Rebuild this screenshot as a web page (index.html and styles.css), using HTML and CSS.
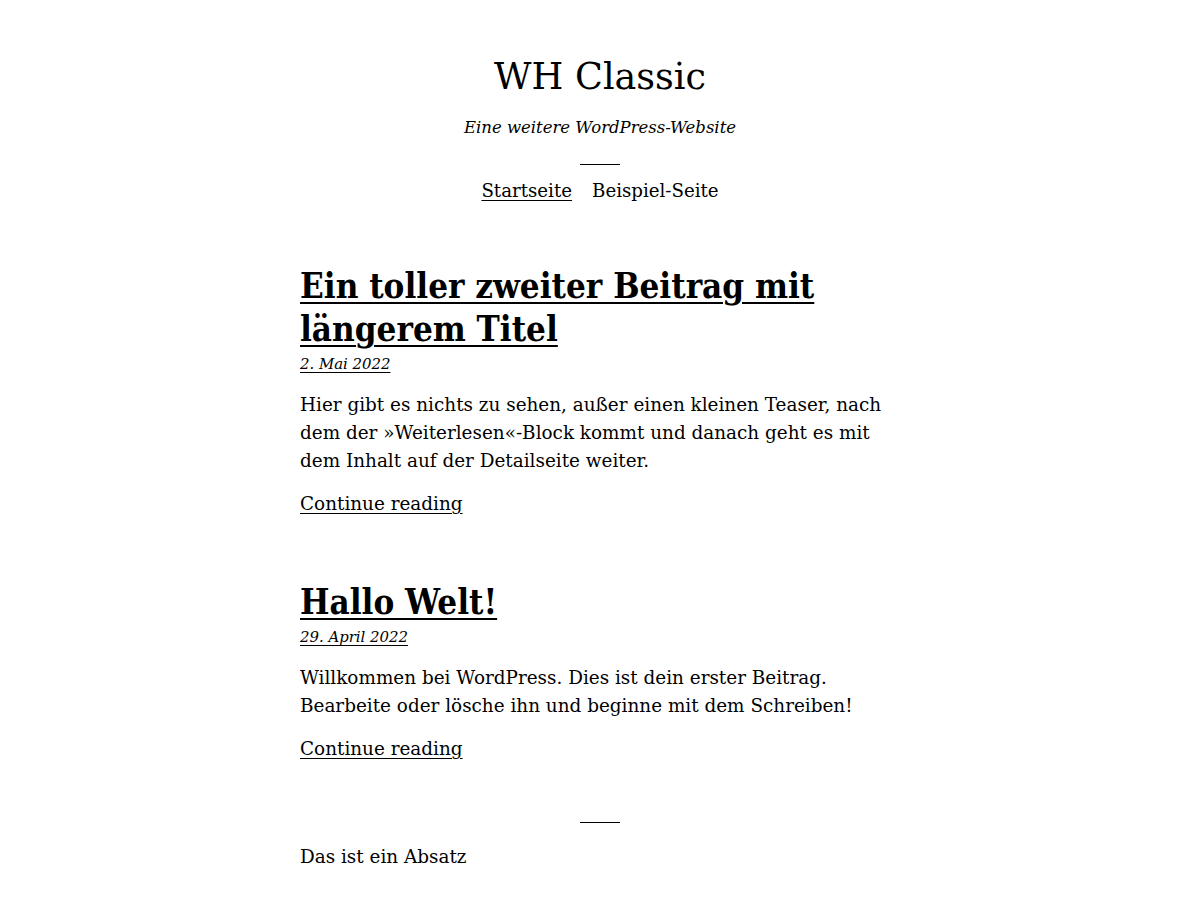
FILE: index.html
```html
<!DOCTYPE html>
<html lang="de">
<head>
<meta charset="utf-8">
<title>WH Classic</title>
<link rel="stylesheet" href="styles.css">
</head>
<body>
<header class="site-header">
  <p class="site-title">WH Classic</p>
  <p class="site-tagline">Eine weitere WordPress-Website</p>
  <hr class="sep">
  <nav class="nav">
    <a class="nav-link current" href="#">Startseite</a>
    <a class="nav-link" href="#">Beispiel-Seite</a>
  </nav>
</header>
<main class="content">
  <article class="post">
    <h2 class="post-title"><a href="#">Ein toller zweiter Beitrag mit längerem Titel</a></h2>
    <p class="post-date"><a href="#">2. Mai 2022</a></p>
    <p class="post-text">Hier gibt es nichts zu sehen, außer einen kleinen Teaser, nach dem der »Weiterlesen«-Block kommt und danach geht es mit dem Inhalt auf der Detailseite weiter.</p>
    <p class="post-more"><a href="#">Continue reading</a></p>
  </article>
  <article class="post">
    <h2 class="post-title"><a href="#">Hallo Welt!</a></h2>
    <p class="post-date"><a href="#">29. April 2022</a></p>
    <p class="post-text">Willkommen bei WordPress. Dies ist dein erster Beitrag. Bearbeite oder lösche ihn und beginne mit dem Schreiben!</p>
    <p class="post-more"><a href="#">Continue reading</a></p>
  </article>
</main>
<footer class="site-footer">
  <hr class="sep">
  <p class="footer-text">Das ist ein Absatz</p>
</footer>
</body>
</html>
```

FILE: styles.css
```css
html, body {
  margin: 0;
  padding: 0;
  background: #fff;
  color: #000;
}
body {
  font-family: "DejaVu Serif", "Liberation Serif", serif;
  font-size: 18.4px;
  line-height: 28px;
}
a {
  color: #000;
  text-decoration: underline;
  text-decoration-thickness: 1px;
  text-underline-offset: 3px;
}
p { margin: 0; }

.site-header {
  display: flex;
  flex-direction: column;
  align-items: center;
  padding-top: 53px;
}
.site-title {
  font-size: 36.5px;
  line-height: 48px;
}
.site-tagline {
  font-style: italic;
  font-size: 16.5px;
  line-height: 28px;
  margin-top: 13px;
}
.sep {
  width: 40px;
  height: 0;
  border: 0;
  border-top: 1px solid #000;
  margin: 22px auto 12px;
}
.nav {
  display: flex;
  gap: 20px;
  font-size: 18.2px;
}
.nav-link { text-decoration: none; }
.nav-link.current { text-decoration: underline; }

.content {
  width: 600px;
  margin: 59px auto 0;
}
.post { margin-bottom: 62px; }
.post:last-child { margin-bottom: 59px; }
.post-title {
  margin: 0;
  font-size: 34.7px;
  line-height: 43px;
  font-weight: 700;
  font-stretch: condensed;
}
.post-title a { text-decoration-thickness: 2px; text-underline-offset: 4px; }
.post-date {
  font-style: italic;
  font-size: 14.9px;
  line-height: 24px;
  margin-top: 2px;
}
.post-text { margin-top: 15px; }
.post-more { margin-top: 15px; }

.site-footer {
  width: 600px;
  margin: 0 auto;
}
.site-footer .sep { margin: 0 auto 20px; }
```
